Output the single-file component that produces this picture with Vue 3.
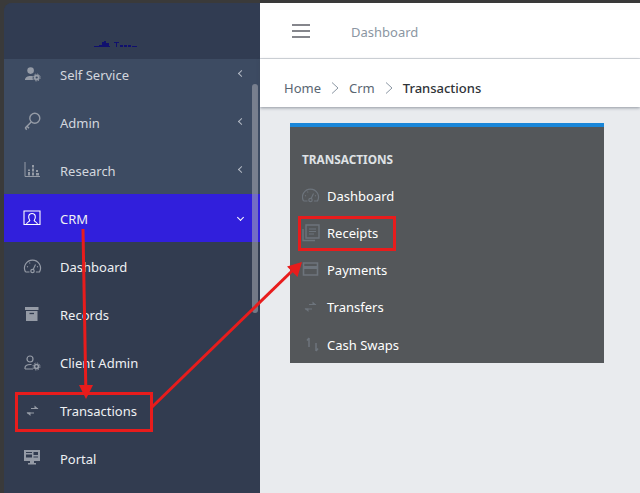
<script setup>
const sideTop = [
  { label: 'Self Service', icon: 'selfservice', cls: 'clipped' },
  { label: 'Admin', icon: 'key' },
  { label: 'Research', icon: 'chart' },
]
const sideBottom = [
  { label: 'Dashboard', icon: 'gauge' },
  { label: 'Records', icon: 'archive' },
  { label: 'Client Admin', icon: 'useradmin' },
  { label: 'Transactions', icon: 'transfer' },
  { label: 'Portal', icon: 'monitor' },
]
const cardItems = [
  { label: 'Dashboard', icon: 'gauge' },
  { label: 'Receipts', icon: 'receipts' },
  { label: 'Payments', icon: 'card' },
  { label: 'Transfers', icon: 'transfer' },
  { label: 'Cash Swaps', icon: 'swap' },
]
const icons = {
  selfservice: '<circle cx="6.600" cy="4.600" r="3.300" fill="currentColor"/><path d="M1 14c0-2.800 2.500-4 5.600-4 1 0 1.700.1 2.400.3-.5 1.100-.5 2.500 0 3.700z" fill="currentColor"/><circle cx="12.700" cy="11.500" r="2" fill="none" stroke="currentColor" stroke-width="1.800"/><circle cx="12.700" cy="11.500" r="3.500" fill="none" stroke="currentColor" stroke-width="1" stroke-dasharray="1.400 1.350"/>',
  key: '<circle cx="10.800" cy="4.300" r="5" fill="none" stroke="currentColor" stroke-width="1.400"/><path d="M7.200 8 1.200 14M3 12.300l2 2M1.200 14l1.600 1.600" fill="none" stroke="currentColor" stroke-width="1.500"/>',
  chart: '<path d="M1 0v14.500h15" fill="none" stroke="currentColor" stroke-width="1"/><path d="M4 10h2v3.500H4zM4 7.500h2v1.500H4zM8 3h2v2.500H8zM8 6.500h2v3H8zM8 10.500h2v3H8zM12 8h2v2h-2zM12 11h3v2.500h-3z" fill="currentColor"/>',
  gauge: '<path d="M1.500 14a8 8 0 1 1 14 0h-3.600M5.500 14h-4" fill="none" stroke="currentColor" stroke-width="1.200"/><circle cx="8.500" cy="13" r="1.700" fill="none" stroke="currentColor" stroke-width="1.200"/><path d="m9.200 11.500 2.300-5M3 8.500l1 .5M14 8.500l-1 .5M5.500 4.500l.5 1" fill="none" stroke="currentColor" stroke-width="1.100"/>',
  archive: '<path d="M1 1h13.500v3H1zM2 5h11.500v10H2z" fill="currentColor"/><path d="M5.500 7.500h4.500" stroke="#323c50" stroke-width="1.300"/>',
  useradmin: '<circle cx="6" cy="5" r="3" fill="none" stroke="currentColor" stroke-width="1.200"/><path d="M1 15v-1c0-2.500 2.500-3.500 5.500-3.500h1M1 15h8" fill="none" stroke="currentColor" stroke-width="1.200"/><circle cx="12.500" cy="12.500" r="2" fill="none" stroke="currentColor" stroke-width="1.700"/><circle cx="12.500" cy="12.500" r="3.500" fill="none" stroke="currentColor" stroke-width="1" stroke-dasharray="1.400 1.350"/>',
  transfer: '<path d="M7 6.500h7M3 11h7" fill="none" stroke="currentColor" stroke-width="1.200"/><path d="M10.500 3.500 14.500 7H10.500zM6.500 14 2.500 10.500H6.500z" fill="currentColor"/>',
  monitor: '<path d="M0 0h16v11H0z" fill="currentColor"/><path d="M2 2h6v1H2zM9.500 2H14v3H9.500zM2 4.500h6v3H2zM9.500 6.500H14v1H9.500z" fill="#323c50"/><path d="M6 11h4v2h2v1.500H4V13h2z" fill="currentColor"/>',
  receipts: '<path d="M1 5v11.500h12" fill="none" stroke="currentColor" stroke-width="1.400"/><path d="M4 1h13v13H4z" fill="none" stroke="currentColor" stroke-width="1.400"/><path d="M7 5h7M7 7.500h7M7 10h5" stroke="currentColor" stroke-width="1.200"/>',
  card: '<path d="M1.500 2h14v12h-14z" fill="none" stroke="currentColor" stroke-width="1.600"/><path d="M1.500 5h14v3h-14z" fill="currentColor"/>',
  swap: '<path d="M7 2v9M7 2 5 4.500M14 7v8M14 15l2-2.500" fill="none" stroke="currentColor" stroke-width="1.500"/>',
}
</script>

<template>
  <div class="frame">
    <aside class="sidebar">
      <div class="logo">
        <svg class="logo-mark" width="44" height="6" viewBox="0 0 44 6">
          <path d="M0 5h5V4h3V1h2V0h2v2h3v3h1v1H0zM20 1h5v1h-2v4h-1V2h-2zM26 4h3v2h-3zM30 4h3v2h-3zM34 4h3v2h-3zM38 5h5v1h-5z" fill="#10106e" />
        </svg>
      </div>
      <nav class="nav">
        <div class="upper">
          <a v-for="item in sideTop" :key="item.label" class="row" :class="item.cls">
            <svg class="ico" width="18" height="18" viewBox="0 0 18 18" v-html="icons[item.icon]"></svg>
            <span class="lbl dim">{{ item.label }}</span>
            <span class="chev-left"></span>
          </a>
        </div>
        <a class="row active">
          <svg class="ico" width="18" height="18" viewBox="0 0 18 18">
            <path d="M0 1h16v13.500H0z" fill="none" stroke="#fff" stroke-width="1.100" />
            <path d="M2.500 14.500c0-2.500 2.800-2.500 3.300-4-2-3-1.500-7 2.200-7s4.200 4 2.200 7c.5 1.500 3.300 1.500 3.300 4" fill="none" stroke="#fff" stroke-width="1.100" />
          </svg>
          <span class="lbl">CRM</span>
          <span class="chev-down"></span>
        </a>
        <a v-for="item in sideBottom" :key="item.label" class="row">
          <svg class="ico" width="18" height="18" viewBox="0 0 18 18" v-html="icons[item.icon]"></svg>
          <span class="lbl">{{ item.label }}</span>
        </a>
      </nav>
      <div class="scrollbar"></div>
    </aside>

    <main class="main">
      <header class="topbar">
        <div class="burger"><i></i><i></i><i></i></div>
        <span class="crumbtitle">Dashboard</span>
      </header>
      <div class="breadcrumb">
        <span>Home</span>
        <svg width="8" height="12" viewBox="0 0 8 12"><path d="m1 .5 6 5.500-6 5.500" fill="none" stroke="#8b97a3" stroke-width="1" /></svg>
        <span>Crm</span>
        <svg width="8" height="12" viewBox="0 0 8 12"><path d="m1 .5 6 5.500-6 5.500" fill="none" stroke="#8b97a3" stroke-width="1" /></svg>
        <strong>Transactions</strong>
      </div>
      <section class="content">
        <div class="card">
          <h3>TRANSACTIONS</h3>
          <a v-for="item in cardItems" :key="item.label" class="card-row">
            <svg width="18" height="18" viewBox="0 0 18 18" v-html="icons[item.icon]"></svg>
            <span>{{ item.label }}</span>
          </a>
        </div>
      </section>
    </main>

    <svg class="annot" width="640" height="493" viewBox="0 0 640 493">
      <g fill="none" stroke="#e81c1c">
        <rect x="16.500" y="393.500" width="135" height="37" stroke-width="3" />
        <rect x="299.500" y="217.500" width="95" height="32" stroke-width="3" />
        <path d="M83 229 85.800 387" stroke-width="3" />
        <path d="M151 408 292 271" stroke-width="3" />
      </g>
      <path d="M79 385h14l-7 14zM302 262l-4.500 15-10.500-10.500z" fill="#e81c1c" />
    </svg>
  </div>
</template>

<style>
html, body { margin: 0; padding: 0; background: #3a3a3a; }
</style>

<style scoped>
.frame {
  width: 640px;
  height: 493px;
  box-sizing: border-box;
  padding: 3px 0 0 4px;
  display: flex;
  overflow: hidden;
  position: relative;
  background: #3a3a3a;
  font-family: "Noto Sans", "Open Sans", sans-serif;
  font-size: 13px;
}
.sidebar {
  width: 256px;
  flex: none;
  position: relative;
  background: #323c50;
  border-top-left-radius: 8px;
  overflow: hidden;
  display: flex;
  flex-direction: column;
}
.logo {
  height: 56px;
  flex: none;
  background: #313c52;
  display: flex;
  justify-content: center;
  align-items: flex-end;
  padding-bottom: 12px;
  box-sizing: border-box;
}
.logo-mark { display: block; margin-right: 32px; }
.upper { background: #3d4b62; }
.row {
  height: 48px;
  display: flex;
  align-items: center;
  padding: 2px 14px 0 20px;
  box-sizing: border-box;
  color: #fff;
}
.row.clipped { height: 39px; padding-top: 1px; padding-bottom: 8px; }
.row.active { background: #311fdc; }
.ico { flex: none; color: #959ba6; margin-right: 18px; overflow: visible; }
.lbl { flex: 1; color: #eef0f3; }
.lbl.dim { color: #d3d7de; }
.chev-left, .chev-down {
  width: 4px;
  height: 4px;
  border-left: 1.500px solid #b4bac5;
  border-bottom: 1.500px solid #b4bac5;
  flex: none;
}
.chev-left { transform: rotate(45deg); margin: -3px 2px 0 0; }
.chev-down { transform: rotate(-45deg); border-color: #fff; margin: -4px 3px 0 0; }
.scrollbar {
  position: absolute;
  right: 2px;
  top: 81px;
  width: 6px;
  height: 229px;
  border-radius: 3px;
  background: rgba(170, 172, 178, 0.55);
}
.main {
  flex: 1;
  min-width: 0;
  display: flex;
  flex-direction: column;
  background: #e9ebee;
}
.topbar {
  height: 56px;
  flex: none;
  box-sizing: border-box;
  background: #fff;
  border-bottom: 1px solid #d8dbe0;
  display: flex;
  align-items: center;
  padding-left: 32px;
}
.burger { width: 18px; display: flex; flex-direction: column; gap: 4px; margin-right: 41px; margin-top: 1px; }
.burger i { display: block; height: 2px; background: #85868c; }
.crumbtitle { color: #8b96a2; margin-top: 2px; }
.breadcrumb {
  height: 48px;
  flex: none;
  box-sizing: border-box;
  background: #fff;
  box-shadow: 0 1px 3px rgba(60, 70, 85, 0.5);
  display: flex;
  align-items: center;
  gap: 10px;
  padding: 10px 0 0 24px;
  color: #5a6672;
  position: relative;
}
.breadcrumb strong { color: #2f3338; font-weight: 500; }
.content { padding: 16px 36px 0 30px; }
.card {
  height: 240px;
  box-sizing: border-box;
  border-top: 4px solid #1a86d8;
  background: #54575a;
  padding: 23px 12px 0;
}
.card h3 {
  margin: 0 0 9px;
  font-size: 11.800px;
  line-height: 18px;
  font-weight: 700;
  color: #dfe2e5;
}
.card-row {
  height: 37.250px;
  display: flex;
  align-items: center;
  gap: 7px;
  color: #fff;
}
.card-row svg { color: #6d747c; flex: none; }
.annot { position: absolute; left: 0; top: 0; pointer-events: none; }
</style>
